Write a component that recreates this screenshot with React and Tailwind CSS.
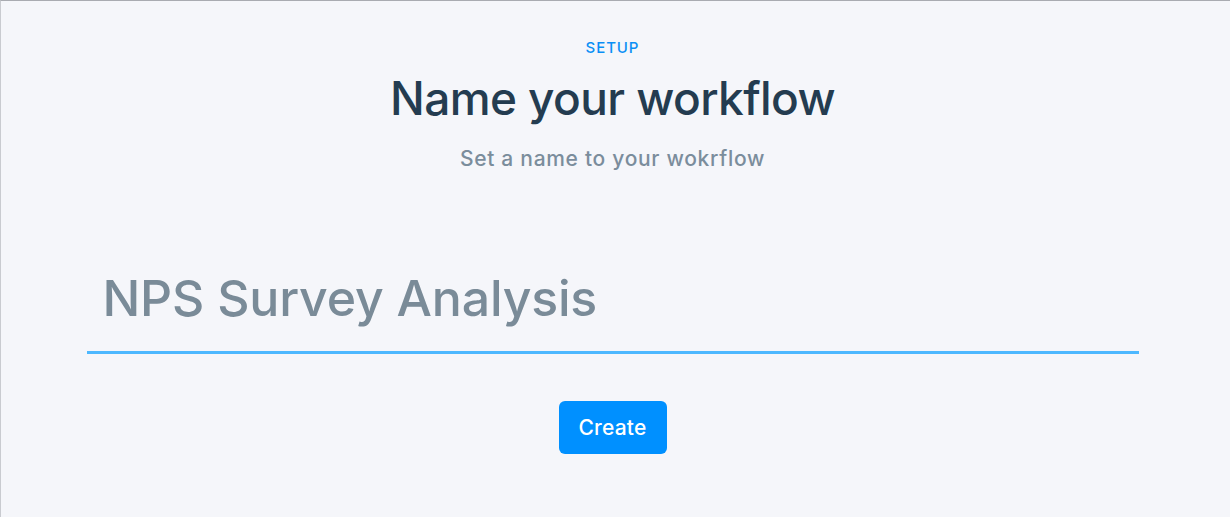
import React from 'react';

export default function App() {
  return (
    <div className="w-[1230px] h-[517px] bg-[#f5f6fa] border-t border-t-[#a9abb1] border-l border-l-[#c9cbd0] overflow-hidden" style={{ fontFamily: 'Inter, "Noto Sans", sans-serif' }}>
      <div className="w-[1223px] flex flex-col items-center">
        <div className="mt-[38px] text-[15px] leading-[18px] font-medium text-[#0a8ff5] tracking-[0.9px]">SETUP</div>
        <h1 className="mt-[13px] text-[46px] leading-[56px] font-medium text-[#243c50] tracking-[-0.6px]">Name your workflow</h1>
        <p className="mt-[20px] text-[21px] leading-[26px] font-medium text-[#7b8d9c] tracking-[0.7px]">Set a name to your wokrflow</p>
        <div className="mt-[96px] w-[1052px] border-b-[3px] border-b-[#4db8ff] pl-[16px] pb-[23px]">
          <input
            defaultValue="NPS Survey Analysis"
            className="w-full bg-transparent outline-none text-[50px] leading-[60px] font-medium text-[#7a8b98] tracking-[-0.2px]"
          />
        </div>
        <button className="mt-[47px] w-[108px] h-[53px] rounded-[6px] bg-[#0090ff] text-white text-[21px] font-medium tracking-[0.2px]">
          Create
        </button>
      </div>
    </div>
  );
}
